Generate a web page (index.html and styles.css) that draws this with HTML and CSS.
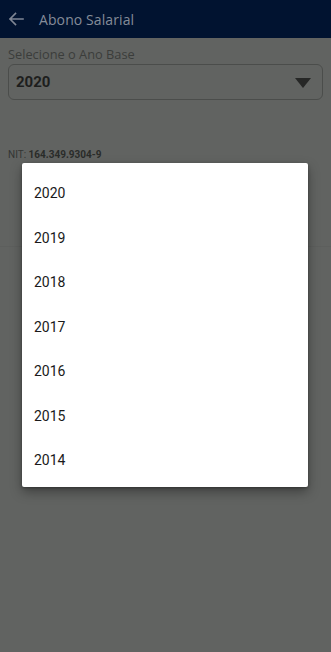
FILE: index.html
```html
<!DOCTYPE html>
<html lang="pt-BR">
<head>
<meta charset="utf-8">
<title>Abono Salarial</title>
<link rel="stylesheet" href="styles.css">
</head>
<body>
<div class="screen">
  <header class="appbar">
    <svg class="back" width="16" height="14" viewBox="0 0 16 14" aria-hidden="true">
      <path d="M15 7H2M7.5 1.5L2 7l5.5 5.5" fill="none" stroke="currentColor" stroke-width="1.6" stroke-linecap="square"/>
    </svg>
    <span class="title">Abono Salarial</span>
  </header>
  <main class="content">
    <div class="field-label">Selecione o Ano Base</div>
    <div class="select">
      <span class="select-value">2020</span>
      <svg class="caret" width="16" height="10" viewBox="0 0 16 10" aria-hidden="true"><path d="M0 0h16L8 10z" fill="currentColor"/></svg>
    </div>
    <div class="nit">NIT: <b>164.349.9304-9</b></div>
    <div class="divider"></div>
  </main>
  <div class="dialog">
    <div class="option">2020</div>
    <div class="option">2019</div>
    <div class="option">2018</div>
    <div class="option">2017</div>
    <div class="option">2016</div>
    <div class="option">2015</div>
    <div class="option">2014</div>
  </div>
</div>
</body>
</html>
```
FILE: styles.css
```css
* { box-sizing: border-box; }
html, body { margin: 0; padding: 0; }
body {
  background: #616361;
  font-family: "Open Sans", "Noto Sans", sans-serif;
}
.screen {
  position: relative;
  width: 331px;
  height: 652px;
  overflow: hidden;
  background: #616361;
}
.appbar {
  height: 38px;
  background: #011330;
  display: flex;
  align-items: center;
  padding-left: 8px;
  color: #7f8694;
}
.back { display: block; margin-right: 15px; }
.title {
  font-size: 14px;
  color: #858c99;
  letter-spacing: 0.1px;
}
.content {
  padding: 8px 8px 0;
  display: flex;
  flex-direction: column;
}
.field-label {
  font-size: 12.8px;
  line-height: 17px;
  color: #3b3d3b;
}
.select {
  margin-top: 1px;
  height: 36px;
  border: 1px solid #4b4d4b;
  border-radius: 6px;
  display: flex;
  align-items: center;
  justify-content: space-between;
  padding: 0 11px 0 7px;
}
.select-value {
  font-family: Roboto, "Noto Sans", sans-serif;
  font-weight: 700;
  font-size: 15px;
  color: #1d1e1d;
}
.caret { color: #262726; display: block; margin-top: 1px; }
.nit {
  margin-top: 48px;
  font-family: Roboto, "Noto Sans", sans-serif;
  font-size: 10px;
  line-height: 13px;
  color: #333533;
}
.nit b { font-weight: 700; color: #2a2c2a; }
.divider {
  margin: 85px -8px 0;
  height: 1px;
  background: #5d5f5d;
}
.dialog {
  position: absolute;
  top: 163px;
  left: 22px;
  width: 286px;
  padding: 8px 0 4px;
  background: #ffffff;
  border-radius: 2px;
  box-shadow: 0 5px 12px rgba(0,0,0,0.35), 0 1px 3px rgba(0,0,0,0.3);
}
.option {
  height: 44.5px;
  display: flex;
  align-items: center;
  padding-left: 12px;
  font-family: Roboto, "Noto Sans", sans-serif;
  font-size: 14px;
  color: #1a1a1a;
}
```
